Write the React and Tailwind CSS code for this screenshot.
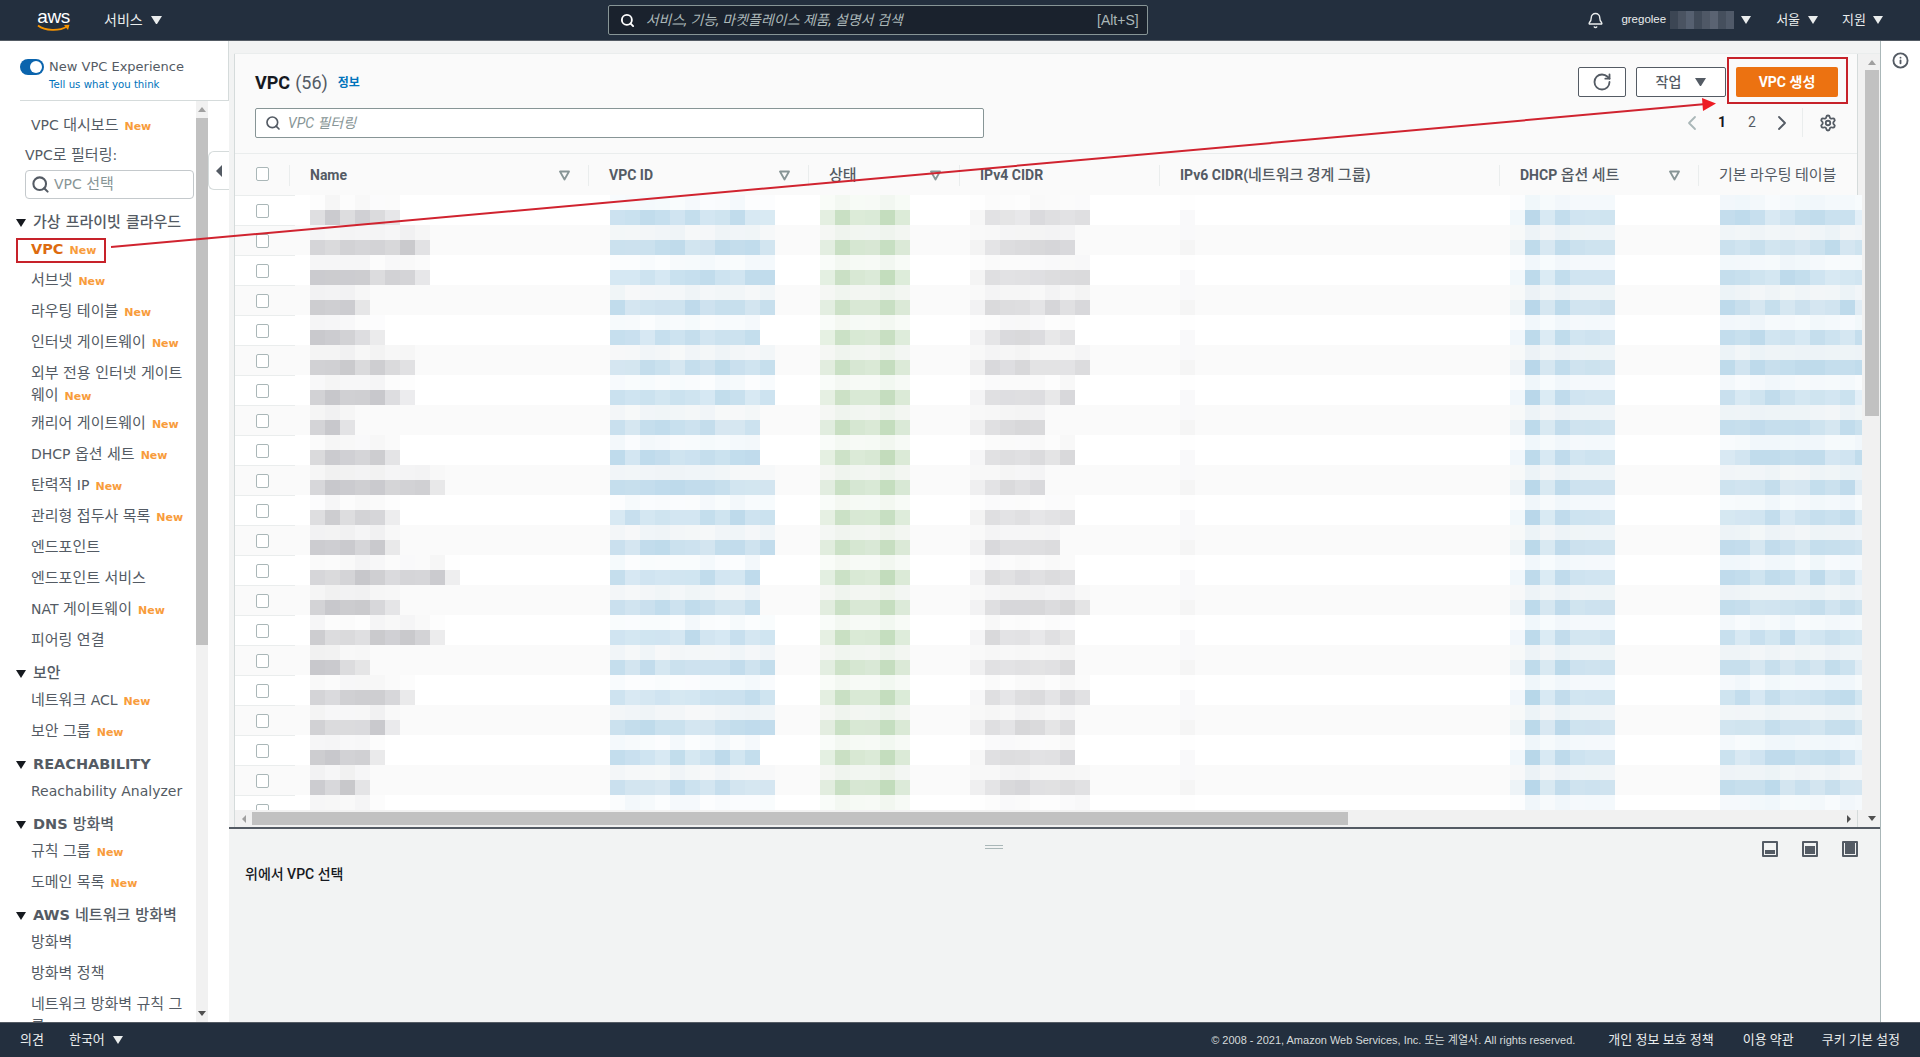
import React from 'react';
import { Bell, ChevronLeft, ChevronRight, Info, RotateCw, Search, Settings } from 'lucide-react';

// pseudo random but stable, the blurred cells must not change between renders
const noise = (a, b, c) => {
    const x = Math.sin(a * 127.1 + b * 311.7 + c * 74.7) * 43758.5453;
    return x - Math.floor(x);
};

const mix = (ink, bg, t) => {
    const ch = ink.map((v, i) => Math.round(bg + (v - bg) * t));
    return `rgb(${ch[0]},${ch[1]},${ch[2]})`;
};

const GRAY = [196, 196, 200];
const BLUE = [186, 216, 234];
const GREEN = [196, 221, 190];

const nameCounts = [6, 8, 8, 4, 5, 7, 7, 3, 6, 9, 6, 6, 10, 6, 9, 4, 7, 6, 5, 4, 5];
const vpcCounts = [11, 11, 11, 11, 10, 11, 11, 10, 10, 11, 11, 11, 10, 10, 11, 11, 11, 11, 10, 11, 11];
const ipv4Counts = [8, 7, 8, 8, 7, 8, 7, 5, 7, 5, 7, 6, 7, 8, 7, 7, 8, 7, 7, 8, 8];

const statusPattern = [0.45, 0.9, 0.65, 0.65, 1, 0.6];
const dhcpPattern = [0.2, 1, 0.55, 0.95, 0.7, 0.7, 0.7];

const columns = [
    { key: 0, cls: 'w-[315px] pl-[15px]', ink: GRAY, counts: nameCounts },
    { key: 1, cls: 'w-[210px]', ink: BLUE, counts: vpcCounts },
    { key: 2, cls: 'w-[150px]', ink: GREEN, pattern: statusPattern },
    { key: 3, cls: 'w-[210px]', ink: GRAY, counts: ipv4Counts, skip: 1, soft: 0.7 },
    { key: 4, cls: 'w-[330px]', ink: GRAY, counts: null, faint: true },
    { key: 5, cls: 'w-[210px]', ink: BLUE, pattern: dhcpPattern },
    { key: 6, cls: 'w-[143px]', ink: BLUE, route: true },
];

// one row of 15px blocks, "top" is the pale upper half of the blur
const BlockLine = ({ col, row, top, bg }) => {
    let values = [];
    if (col.pattern) {
        values = col.pattern.map((p, i) => (top ? p * 0.22 : p) * (0.92 + noise(row, i, col.key) * 0.12));
    } else if (col.faint) {
        values = [top ? 0.01 : 0.1];
    } else if (col.route) {
        values = Array.from({ length: 10 }, (_, i) => (top ? 0.1 : 0.55) + noise(row, i, 9) * (top ? 0.12 : 0.4));
        if (row % 3 === 0 && !top) values[9] = 0.4;
    } else {
        const n = col.counts[row];
        values = Array.from({ length: n }, (_, i) => {
            const base = (top ? 0.04 : 0.55) + noise(row, i, col.key) * (top ? 0.14 : 0.4);
            return i === n - 1 && col.key === 0 ? base * 0.5 : base * (col.soft || 1);
        });
        if (col.skip) values[0] *= 0.35;
    }
    return (
        <div className="flex h-[15px]">
            {values.map((t, i) => (
                <div key={i} className="w-[15px] h-[15px] shrink-0" style={{ backgroundColor: mix(col.ink, bg, t) }}></div>
            ))}
        </div>
    );
};

const TableRow = ({ row }) => {
    const odd = row % 2 === 0;
    const bg = odd ? 255 : 250;
    return (
        <div className={`flex h-[30px] shrink-0 ${odd ? 'bg-white' : 'bg-[#fafafa]'}`}>
            <div className="w-[60px] shrink-0 pl-[21px] pt-[8px] border-t border-[#eaeded]">
                <div className="w-[13px] h-[14px] rounded-[2px] border border-[#aab7b8] bg-white"></div>
            </div>
            {columns.map((col) => (
                <div key={col.key} className={`${col.cls} shrink-0 overflow-hidden`}>
                    <BlockLine col={col} row={row} top bg={bg} />
                    <BlockLine col={col} row={row} bg={bg} />
                </div>
            ))}
        </div>
    );
};

const SortIcon = () => (
    <svg width="11" height="11" viewBox="0 0 11 11" className="shrink-0">
        <path d="M1 1.5 H10 L5.5 9.5 Z" fill="none" stroke="#879596" strokeWidth="1.8" strokeLinejoin="round" />
    </svg>
);

const Caret = ({ className = '', color = '#ffffff', size = 10 }) => (
    <svg width={size} height={size * 0.8} viewBox="0 0 10 8" className={`shrink-0 ${className}`}>
        <path d="M0 0 H10 L5 8 Z" fill={color} />
    </svg>
);

// hangul runs are set larger than the latin around them, like the reference font
const Ko = ({ text, className = '' }) =>
    text.split(/([가-힣]+)/).map((part, i) =>
        i % 2 === 1 ? (
            <span key={i} className={`text-[15px] leading-none ${className}`}>{part}</span>
        ) : (
            <React.Fragment key={i}>{part}</React.Fragment>
        )
    );

const headers = [
    { label: 'Name', sort: true, cls: 'w-[299px]' },
    { label: 'VPC ID', sort: true, cls: 'w-[220px]' },
    { label: '상태', sort: true, cls: 'w-[151px]' },
    { label: 'IPv4 CIDR', cls: 'w-[200px]' },
    { label: 'IPv6 CIDR(네트워크 경계 그룹)', cls: 'w-[340px]' },
    { label: 'DHCP 옵션 세트', sort: true, cls: 'w-[199px]' },
    { label: '기본 라우팅 테이블', cls: 'w-[159px]', plain: true },
];

const New = () => <span className="ml-[6px] text-[11px] leading-none font-bold text-[#f89c3c]">New</span>;

const NavItem = ({ label, isNew, active, wrapped }) => (
    <div className={`pl-[31px] pr-[6px] ${wrapped ? 'pb-[6px]' : 'pb-[9px]'}`}>
        <div className={`leading-[22px] ${active ? 'font-bold text-[#dd6b10] text-[14.5px]' : ''}`}>
            <Ko text={label} />
            {isNew && <New />}
        </div>
    </div>
);

const NavGroup = ({ title, children }) => (
    <div className="mt-[3px]">
        <div className="flex items-center h-[22px] mb-[4px] pl-[16px] font-bold text-[14.5px] text-[#545b64]">
            <Caret color="#16191f" size={10} className="mr-[7px]" />
            <span className="whitespace-nowrap"><Ko text={title} className="font-medium" /></span>
        </div>
        {children}
    </div>
);

const PaneIcon = ({ fill }) => (
    <svg width="16" height="16" viewBox="0 0 16 16">
        <rect x="0" y="0" width="16" height="16" rx="1" fill="#545b64" />
        <rect x="2" y="2" width="12" height="12" fill="#f2f3f3" />
        <rect x="3" y={14 - fill} width="10" height={fill - 1} fill="#545b64" />
    </svg>
);

const ScrollUp = () => (
    <svg width="8" height="5" viewBox="0 0 8 5"><path d="M4 0 L8 5 H0 Z" fill="#a0a0a0" /></svg>
);
const ScrollDown = () => (
    <svg width="8" height="5" viewBox="0 0 8 5"><path d="M0 0 H8 L4 5 Z" fill="#505050" /></svg>
);

const blurred = ['#3c4654', '#4a5361', '#566070', '#414b59', '#4f5866', '#5a6372', '#454f5d', '#505a69'];

export default function App() {
    return (
        <div className="relative h-[1057px] w-[1920px] overflow-hidden flex flex-col bg-white font-['Roboto','Noto_Sans_CJK_KR',sans-serif] text-[14px] text-[#16191f]">
            {/* barre du haut */}
            <header className="h-[41px] shrink-0 flex items-center bg-[#232f3e] border-b border-[#545b64] text-white">
                <div className="ml-[37px] w-[33px] h-[24px] relative shrink-0">
                    <span className="block text-center text-[19px] leading-[17px] font-normal tracking-[-0.5px] font-['Liberation_Sans',sans-serif]">aws</span>
                    <svg width="33" height="8" viewBox="0 0 33 8" className="absolute left-0 bottom-0">
                        <path d="M1 1.5 C8 7 22 7.5 30 2.5" fill="none" stroke="#f79400" strokeWidth="1.8" />
                        <path d="M27 1 L32.5 0.8 L31 6 Z" fill="#f79400" />
                    </svg>
                </div>
                <span className="ml-[34px] text-[14px] text-[#eaeded]">서비스</span>
                <Caret className="ml-[8px]" color="#eaeded" size={11} />

                <div className="ml-[446px] w-[540px] h-[30px] shrink-0 flex items-center bg-[#1a222d] border border-[#879596] rounded-[2px]">
                    <Search size={15} strokeWidth={3} className="ml-[11px] text-white shrink-0" />
                    <span className="ml-[11px] italic text-[14px] text-[#aab7b8]">서비스, 기능, 마켓플레이스 제품, 설명서 검색</span>
                    <span className="ml-auto mr-[8px] text-[14px] text-[#aab7b8] font-['Liberation_Sans',sans-serif]">[Alt+S]</span>
                </div>

                <div className="ml-auto mr-[37px] flex items-center">
                    <Bell size={17} strokeWidth={2} className="text-[#eaeded]" />
                    <span className="ml-[17px] text-[11.5px] text-[#eaeded] font-['Liberation_Sans',sans-serif]">gregolee</span>
                    <div className="ml-[4px] flex h-[18px]">
                        {blurred.map((c, i) => (
                            <div key={i} className="w-[8px] h-[18px]" style={{ backgroundColor: c }}></div>
                        ))}
                    </div>
                    <Caret className="ml-[7px]" color="#eaeded" size={10} />
                    <span className="ml-[25px] text-[13px] text-[#eaeded]">서울</span>
                    <Caret className="ml-[8px]" color="#eaeded" size={10} />
                    <span className="ml-[24px] text-[13px] text-[#eaeded]">지원</span>
                    <Caret className="ml-[7px]" color="#eaeded" size={10} />
                </div>
            </header>

            <div className="flex-1 min-h-0 flex">
                {/* menu de gauche */}
                <aside className="w-[229px] shrink-0 flex flex-col bg-white font-['DejaVu_Sans','Noto_Sans_CJK_KR',sans-serif] text-[14px] text-[#545b64]">
                    <div className="h-[60px] shrink-0 ml-[20px] border-b border-r border-[#d5dbdb] pt-[18px] flex">
                        <div className="w-[24px] h-[16px] rounded-full bg-[#0a64ad] flex items-center justify-end pr-[2px]">
                            <div className="w-[12px] h-[12px] rounded-full bg-white"></div>
                        </div>
                        <div className="ml-[5px] -mt-[2px]">
                            <div className="leading-[20px] text-[13px]">New VPC Experience</div>
                            <div className="leading-[16px] text-[10.2px] text-[#0073bb]">Tell us what you think</div>
                        </div>
                    </div>
                    <div className="flex-1 min-h-0 flex">
                        <div className="w-[196px] shrink-0 overflow-hidden pt-[13px]">
                            <NavItem label="VPC 대시보드" isNew />
                            <div className="pl-[25px] leading-[22px] -mt-[1px]"><Ko text="VPC로 필터링:" /></div>
                            <div className="ml-[25px] mr-[2px] mt-[4px] h-[29px] border border-[#c4c9cc] rounded-[4px] flex items-center pl-[5px] text-[#879596]">
                                <Search size={19} strokeWidth={2.6} className="text-[#545b64] shrink-0" />
                                <span className="ml-[4px]"><Ko text="VPC 선택" /></span>
                            </div>
                            <div className="h-[10px]"></div>
                            <NavGroup title="가상 프라이빗 클라우드">
                                <NavItem label="VPC" isNew active />
                                <NavItem label="서브넷" isNew />
                                <NavItem label="라우팅 테이블" isNew />
                                <NavItem label="인터넷 게이트웨이" isNew />
                                <NavItem label="외부 전용 인터넷 게이트웨이" isNew wrapped />
                                <NavItem label="캐리어 게이트웨이" isNew />
                                <NavItem label="DHCP 옵션 세트" isNew />
                                <NavItem label="탄력적 IP" isNew />
                                <NavItem label="관리형 접두사 목록" isNew />
                                <NavItem label="엔드포인트" />
                                <NavItem label="엔드포인트 서비스" />
                                <NavItem label="NAT 게이트웨이" isNew />
                                <NavItem label="피어링 연결" />
                            </NavGroup>
                            <NavGroup title="보안">
                                <NavItem label="네트워크 ACL" isNew />
                                <NavItem label="보안 그룹" isNew />
                            </NavGroup>
                            <NavGroup title="REACHABILITY">
                                <NavItem label="Reachability Analyzer" />
                            </NavGroup>
                            <NavGroup title="DNS 방화벽">
                                <NavItem label="규칙 그룹" isNew />
                                <NavItem label="도메인 목록" isNew />
                            </NavGroup>
                            <NavGroup title="AWS 네트워크 방화벽">
                                <NavItem label="방화벽" />
                                <NavItem label="방화벽 정책" />
                                <NavItem label="네트워크 방화벽 규칙 그룹" />
                            </NavGroup>
                        </div>
                        <div className="w-[12px] shrink-0 bg-[#f1f1f1] flex flex-col items-center">
                            <div className="h-[17px] flex items-center justify-center"><ScrollUp /></div>
                            <div className="w-full h-[527px] bg-[#c1c1c1]"></div>
                            <div className="mt-auto h-[17px] flex items-center justify-center"><ScrollDown /></div>
                        </div>
                        <div className="flex-1 pt-[50px]">
                            <div className="h-[39px] border border-r-0 border-[#d5dbdb] rounded-l-[6px] flex items-center justify-center">
                                <svg width="6" height="12" viewBox="0 0 6 12"><path d="M6 0 V12 L0 6 Z" fill="#545b64" /></svg>
                            </div>
                        </div>
                    </div>
                </aside>

                {/* zone principale */}
                <main className="flex-1 min-w-0 flex flex-col bg-[#f2f3f3] border-r border-[#aab7b8]">
                    <div className="h-[12px] shrink-0"></div>
                    <div className="h-[774px] shrink-0 flex ml-[5px] border-t border-[#eaeded]">
                        <div className="flex-1 min-w-0 flex flex-col bg-[#fafafa] border-l border-r border-[#d5dbdb]">
                            <div className="h-[100px] shrink-0 border-b border-[#eaeded] flex">
                                <div className="flex-1 pl-[20px] pt-[15px]">
                                    <div className="flex items-center h-[26px]">
                                        <span className="text-[18px] font-bold">VPC</span>
                                        <span className="ml-[5px] text-[18px] text-[#545b64]">(56)</span>
                                        <span className="ml-[10px] mt-[2px] text-[12px] font-bold text-[#0073bb]">정보</span>
                                    </div>
                                    <div className="mt-[13px] w-[729px] h-[30px] bg-white border border-[#879596] rounded-[2px] flex items-center">
                                        <Search size={16} strokeWidth={2.5} className="ml-[9px] text-[#545b64]" />
                                        <span className="ml-[7px] italic text-[#879596]">VPC 필터링</span>
                                    </div>
                                </div>
                                <div className="w-[290px] shrink-0 flex flex-col items-end pr-[19px] pt-[13px]">
                                    <div className="flex gap-[10px]">
                                        <div className="w-[48px] h-[30px] bg-white border border-[#545b64] rounded-[2px] flex items-center justify-center">
                                            <RotateCw size={20} strokeWidth={2.2} className="text-[#545b64]" />
                                        </div>
                                        <div className="w-[90px] h-[30px] bg-white border border-[#545b64] rounded-[2px] flex items-center justify-center gap-[14px] font-medium text-[#545b64]">
                                            작업
                                            <Caret color="#545b64" size={11} />
                                        </div>
                                        <div className="w-[102px] h-[30px] bg-[#ec7211] rounded-[2px] flex items-center justify-center font-bold text-white">
                                            VPC 생성
                                        </div>
                                    </div>
                                    <div className="mt-[11px] flex items-center h-[29px]">
                                        <ChevronLeft size={24} strokeWidth={1.8} className="text-[#aab7b8]" />
                                        <span className="w-[36px] text-center font-bold">1</span>
                                        <span className="w-[24px] text-center text-[#545b64]">2</span>
                                        <ChevronRight size={24} strokeWidth={1.8} className="ml-[6px] text-[#545b64]" />
                                        <div className="ml-[8px] w-px h-[29px] bg-[#eaeded]"></div>
                                        <Settings size={18} strokeWidth={2.4} className="ml-[16px] mr-px text-[#545b64]" />
                                    </div>
                                </div>
                            </div>

                            <div className="h-[41px] shrink-0 flex items-center pt-[2px] font-bold text-[#545b64]">
                                <div className="w-[54px] shrink-0 pl-[21px] pb-[4px]">
                                    <div className="w-[13px] h-[14px] rounded-[2px] border border-[#aab7b8] bg-white"></div>
                                </div>
                                {headers.map((h) => (
                                    <div key={h.label} className={`${h.cls} shrink-0 h-[21px] border-l border-[#eaeded] pl-[20px] pr-[18px] flex items-center justify-between`}>
                                        <span className={`whitespace-nowrap ${h.plain ? 'font-normal' : ''}`}><Ko text={h.label} className={h.plain ? '' : 'font-medium'} /></span>
                                        {h.sort && <SortIcon />}
                                    </div>
                                ))}
                            </div>

                            <div className="flex-1 min-h-0 overflow-hidden flex flex-col -mr-[5px] relative z-10">
                                {nameCounts.map((_, i) => (
                                    <TableRow key={i} row={i} />
                                ))}
                            </div>

                            <div className="h-[17px] shrink-0 bg-[#f1f1f1] flex items-center">
                                <div className="w-[17px] shrink-0 flex justify-center">
                                    <svg width="4" height="8" viewBox="0 0 4 8"><path d="M4 0 V8 L0 4 Z" fill="#a0a0a0" /></svg>
                                </div>
                                <div className="w-[1096px] h-[13px] bg-[#c1c1c1]"></div>
                                <div className="ml-auto w-[17px] flex justify-center">
                                    <svg width="4" height="8" viewBox="0 0 4 8"><path d="M0 0 V8 L4 4 Z" fill="#505050" /></svg>
                                </div>
                            </div>
                        </div>
                        <div className="w-[22px] shrink-0 bg-[#f1f1f1] flex flex-col items-end pr-px">
                            <div className="w-[14px] h-[16px] flex items-center justify-center"><ScrollUp /></div>
                            <div className="w-[14px] h-[346px] bg-[#c1c1c1]"></div>
                            <div className="mt-auto w-[14px] h-[17px] flex items-center justify-center"><ScrollDown /></div>
                        </div>
                    </div>

                    {/* volet du bas */}
                    <div className="flex-1 min-h-0 border-t-2 border-[#545b64] flex flex-col">
                        <div className="h-[36px] shrink-0 flex items-center">
                            <div className="ml-[756px] w-[18px] h-[4px] border-y border-[#aab7b8]"></div>
                            <div className="ml-auto mr-[22px] pt-[4px] flex gap-[24px]">
                                <PaneIcon fill={5} />
                                <PaneIcon fill={9} />
                                <PaneIcon fill={12} />
                            </div>
                        </div>
                        <div className="pl-[16px] -mt-[1px] font-medium">위에서 VPC 선택</div>
                    </div>
                </main>

                {/* rail de droite */}
                <div className="w-[39px] shrink-0 bg-white flex justify-center pt-[11px]">
                    <Info size={17} strokeWidth={2.6} className="text-[#545b64]" />
                </div>
            </div>

            {/* pied de page */}
            <footer className="h-[35px] shrink-0 flex items-center bg-[#232f3e] border-t border-[#545b64] text-[#eaeded] text-[13px]">
                <span className="ml-[20px]">의견</span>
                <span className="ml-[25px]">한국어</span>
                <Caret className="ml-[8px]" color="#eaeded" size={10} />
                <span className="ml-auto text-[11px] text-[#d5dbdb] font-['Liberation_Sans','Noto_Sans_CJK_KR',sans-serif]">© 2008 - 2021, Amazon Web Services, Inc. 또는 계열사. All rights reserved.</span>
                <span className="ml-[33px]">개인 정보 보호 정책</span>
                <span className="ml-[29px]">이용 약관</span>
                <span className="ml-[28px] mr-[20px]">쿠키 기본 설정</span>
            </footer>

            {/* annotations rouges de la capture */}
            <div className="absolute left-[16px] top-[238px] w-[90px] h-[25px] border-2 border-[#c7222a]"></div>
            <div className="absolute left-[1727px] top-[57px] w-[121px] h-[47px] border-2 border-[#c7222a]"></div>
            <svg width="1920" height="1057" viewBox="0 0 1920 1057" className="absolute left-0 top-0 pointer-events-none z-20">
                <line x1="111" y1="247" x2="1706" y2="104" stroke="#d0232f" strokeWidth="2" />
                <path d="M1716 103.5 L1702 98 L1703 111 Z" fill="#ed1c24" />
            </svg>
        </div>
    );
}
